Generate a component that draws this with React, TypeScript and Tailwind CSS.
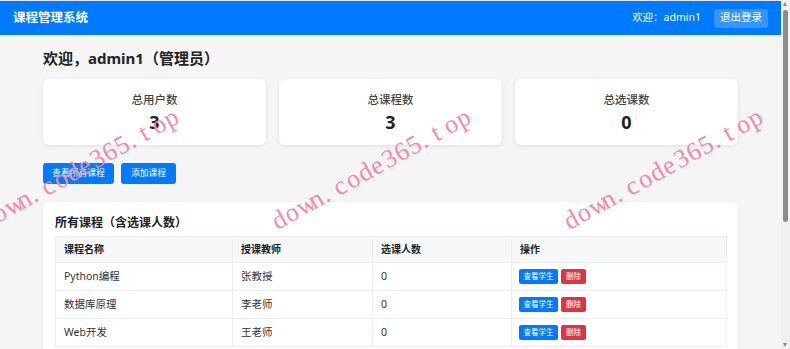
import React from "react";

const FONT = '"Noto Sans", "Noto Sans CJK SC", sans-serif';

const courses = [
  { name: "Python编程", teacher: "张教授", count: 0 },
  { name: "数据库原理", teacher: "李老师", count: 0 },
  { name: "Web开发", teacher: "王老师", count: 0 },
];

function Watermark({ x }: { x: number }) {
  const text = "down.code365.top";
  return (
    <div
      className="absolute top-[209px] leading-none whitespace-nowrap pointer-events-none text-[#f28aac] origin-[0_22px] rotate-[-29deg] flex"
      style={{ left: x, fontFamily: '"Liberation Serif", serif', fontSize: 26 }}
    >
      {text.split("").map((c, i) => (
        <span key={i} className="inline-block w-[14px]">
          {c}
        </span>
      ))}
    </div>
  );
}

export default function App() {
  return (
    <div
      className="relative w-[790px] h-[349px] overflow-hidden flex bg-[#f5f5f5] text-[#333]"
      style={{ fontFamily: FONT }}
    >
      <div className="w-[781px] shrink-0 flex flex-col border-t border-[#e6e6e6]">
        <header className="h-[34px] shrink-0 bg-[#007bff] flex items-center justify-between pl-[13px] pr-[13px] text-white">
          <span className="text-[12.5px] font-bold">课程管理系统</span>
          <div className="flex items-center">
            <span className="text-[10.5px]">欢迎：admin1</span>
            <button className="ml-[13px] h-[19px] px-[6px] rounded-[3px] bg-white/20 text-[10.5px] text-white">
              退出登录
            </button>
          </div>
        </header>
        <main className="w-[695px] shrink-0 mx-auto">
          <h1 className="mt-[13px] text-[15px] leading-[20px] font-bold text-[#222]">
            欢迎，admin1（管理员）
          </h1>
          <div className="mt-[11px] grid grid-cols-3 gap-[13px]">
            {[
              ["总用户数", "3"],
              ["总课程数", "3"],
              ["总选课数", "0"],
            ].map(([label, value]) => (
              <div
                key={label}
                className="h-[66px] bg-white rounded-[6px] shadow-[0_1px_4px_rgba(0,0,0,0.09)] flex flex-col items-center"
              >
                <div className="mt-[13px] text-[11.5px] leading-[16px] font-medium text-[#444]">{label}</div>
                <div className="mt-[3px] text-[18px] leading-[22px] font-bold text-[#222]">{value}</div>
              </div>
            ))}
          </div>
          <div className="mt-[18px] flex gap-[7px]">
            <button className="h-[21px] w-[71px] rounded-[3px] bg-[#007bff] text-white text-[8.8px]">
              查看所有课程
            </button>
            <button className="h-[21px] w-[55px] rounded-[3px] bg-[#007bff] text-white text-[8.8px]">
              添加课程
            </button>
          </div>
          <div className="mt-[18px] bg-white rounded-[6px] shadow-[0_1px_4px_rgba(0,0,0,0.06)] px-[12px] pt-[13px] pb-[12px]">
            <h2 className="text-[12px] leading-[16px] font-bold text-[#222]">所有课程（含选课人数）</h2>
            <table className="mt-[5px] w-[671px] table-fixed border-collapse">
              <colgroup>
                <col className="w-[177px]" />
                <col className="w-[140px]" />
                <col className="w-[139px]" />
                <col className="w-[215px]" />
              </colgroup>
              <thead>
                <tr className="h-[26px] bg-[#f6f7f8]">
                  {["课程名称", "授课教师", "选课人数", "操作"].map((h) => (
                    <th
                      key={h}
                      className="px-[8px] text-left text-[10px] font-bold text-[#222] border border-[#eceef0]"
                    >
                      {h}
                    </th>
                  ))}
                </tr>
              </thead>
              <tbody>
                {courses.map((c) => (
                  <tr key={c.name} className="h-[28px]">
                    <td className="px-[8px] text-[10.5px] border border-[#eceef0]">{c.name}</td>
                    <td className="px-[8px] text-[10.5px] border border-[#eceef0]">{c.teacher}</td>
                    <td className="px-[8px] text-[10.5px] border border-[#eceef0]">{c.count}</td>
                    <td className="px-[7px] border border-[#eceef0]">
                      <div className="flex gap-[3px]">
                        <button className="h-[15px] w-[39px] rounded-[2px] bg-[#007bff] text-white text-[7.5px] leading-none">
                          查看学生
                        </button>
                        <button className="h-[15px] w-[25px] rounded-[2px] bg-[#dc3545] text-white text-[7.5px] leading-none">
                          删除
                        </button>
                      </div>
                    </td>
                  </tr>
                ))}
              </tbody>
            </table>
          </div>
        </main>
      </div>
      <div className="relative w-[9px] shrink-0 h-full bg-[#f1f1f1]">
        <div className="absolute left-[2px] top-[2px] w-0 h-0 border-l-[2.5px] border-r-[2.5px] border-b-[4px] border-l-transparent border-r-transparent border-b-[#888]" />
        <div className="absolute left-[1.5px] top-[10px] w-[5px] h-[212px] rounded-[3px] bg-[#8c8c8c]" />
        <div className="absolute left-[2px] bottom-[2px] w-0 h-0 border-l-[2.5px] border-r-[2.5px] border-t-[4px] border-l-transparent border-r-transparent border-t-[#888]" />
      </div>
      <Watermark x={-14} />
      <Watermark x={278} />
      <Watermark x={570} />
    </div>
  );
}
